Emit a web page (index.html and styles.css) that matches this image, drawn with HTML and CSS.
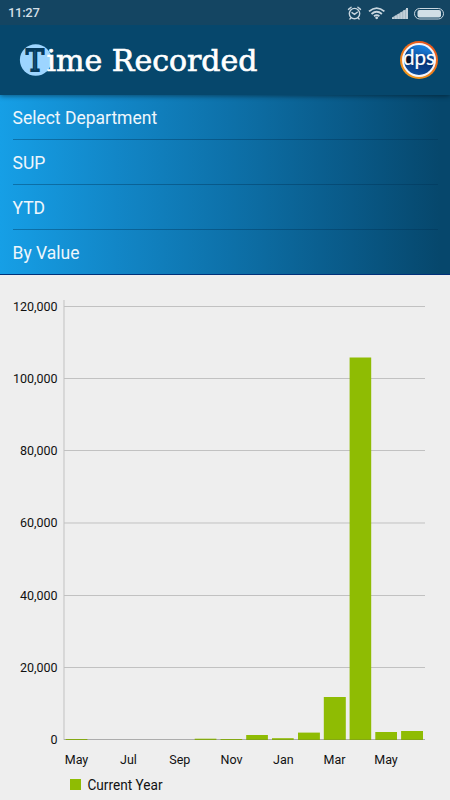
FILE: index.html
```html
<!DOCTYPE html>
<html lang="en">
<head>
  <meta charset="UTF-8">
  <title>Time Recorded</title>
  <link rel="stylesheet" href="styles.css">
</head>
<body>
  <div class="status-bar">
    <span class="clock">11:27</span>
    <svg class="status-icons" width="100" height="24" viewBox="345 0 100 24">
      <!-- alarm -->
      <g fill="none" stroke="#c9d6df" stroke-width="1.4" stroke-linecap="round">
        <circle cx="354.5" cy="12.6" r="5.2"/>
        <path d="M348.5 8.4l2.6-2.2M360.5 8.4l-2.6-2.2M350.9 17l-1 1M358.1 17l1 1M352 11.6l2.5 1.8 2.8-2.2"/>
      </g>
      <!-- wifi -->
      <g fill="none" stroke="#c9d6df" stroke-width="1.8">
        <path d="M369 10.4q7.7-6.6 15.4 0M371.5 13q5.2-4.4 10.4 0M374 15.2q2.7-2.1 5.4 0"/>
      </g>
      <circle cx="376.7" cy="16.8" r="1.4" fill="#c9d6df"/>
      <!-- signal -->
      <path fill="#9fb2bf" d="M392 18v-1.5L408 7v11z"/>
      <path fill="#c3d0d9" d="M392 16.4h2v1.6h-2zM394.8 14.7h2v3.3h-2zM397.6 13h2v5h-2zM400.4 11.3h2v6.7h-2zM403.2 9.3h2v8.7h-2zM406 7h2v11h-2z"/>
      <!-- battery -->
      <rect x="414.5" y="7.5" width="29" height="10.5" rx="5.2" fill="none" stroke="#c9d6df"/>
      <rect x="417.5" y="9" width="23.5" height="7.5" rx="2" fill="#d3dfe6"/>
    </svg>
  </div>

  <header class="app-bar">
    <svg class="title" width="246" height="40" viewBox="16 40 246 40">
      <circle cx="35.7" cy="60" r="15.8" fill="#9dd5ff"/>
      <text class="title-text initial" x="26" y="70.5" textLength="18" lengthAdjust="spacingAndGlyphs">T</text>
      <text class="title-text" x="46.5" y="70.5" textLength="211" lengthAdjust="spacingAndGlyphs">ime Recorded</text>
    </svg>
    <svg class="logo" width="40" height="40" viewBox="0 0 40 40">
      <defs>
        <linearGradient id="ring" x1="0" y1="1" x2="0.6" y2="0">
          <stop offset="0" stop-color="#f5a51c"/>
          <stop offset="1" stop-color="#e8571c"/>
        </linearGradient>
        <linearGradient id="globe" x1="0.3" y1="1" x2="0.6" y2="0">
          <stop offset="0" stop-color="#0d4f9e"/>
          <stop offset="0.55" stop-color="#053073"/>
          <stop offset="1" stop-color="#1c87e8"/>
        </linearGradient>
      </defs>
      <circle cx="20" cy="20" r="19" fill="url(#ring)"/>
      <circle cx="20" cy="20" r="17" fill="#f4f4fa"/>
      <circle cx="20" cy="20" r="15" fill="url(#globe)"/>
      <path d="M7 15A14.3 14.3 0 0 1 33 14Q21 13 16 20Q11 13 7 15z" fill="#197fdc" opacity="0.4"/>
      <circle cx="9.500" cy="20.500" r="4" fill="#04142f"/>
      <text class="logo-text" x="4" y="25.300" textLength="32" lengthAdjust="spacingAndGlyphs">dps</text>
    </svg>
  </header>

  <ul class="filters">
    <li>Select Department</li>
    <li>SUP</li>
    <li>YTD</li>
    <li>By Value</li>
  </ul>

  <main>
    <svg class="chart" width="450" height="525" viewBox="0 275 450 525">
      <path class="grid" d="M64 306.5h361M64 378.5h361M64 450.5h361M64 523h361M64 595.5h361M64 667.5h361M64 739.5h361"/>
      <path class="axis" d="M64 300v440"/>

      <g class="y-labels">
        <text x="57.5" y="311">120,000</text>
        <text x="57.5" y="383">100,000</text>
        <text x="57.5" y="455">80,000</text>
        <text x="57.5" y="527">60,000</text>
        <text x="57.5" y="599.5">40,000</text>
        <text x="57.5" y="671.5">20,000</text>
        <text x="57.5" y="744">0</text>
      </g>

      <g class="bars">
        <rect x="65.7" y="739" width="21.7" height="1"/>
        <rect x="194.7" y="738.7" width="21.7" height="1.3"/>
        <rect x="220.5" y="739" width="21.7" height="1"/>
        <rect x="246.2" y="735" width="21.7" height="5"/>
        <rect x="272" y="738.2" width="21.7" height="1.8"/>
        <rect x="298" y="732.6" width="21.9" height="7.4"/>
        <rect x="323.8" y="697" width="22" height="43"/>
        <rect x="349.6" y="357.5" width="21.6" height="382.5"/>
        <rect x="375.3" y="732" width="21.7" height="8"/>
        <rect x="401.1" y="731" width="21.9" height="9"/>
      </g>
      <path class="baseline" d="M64 739.5h361"/>

      <g class="x-labels">
        <text x="76.5" y="764">May</text>
        <text x="128.5" y="764">Jul</text>
        <text x="179.8" y="764">Sep</text>
        <text x="231.5" y="764">Nov</text>
        <text x="283.3" y="764">Jan</text>
        <text x="334.5" y="764">Mar</text>
        <text x="386" y="764">May</text>
      </g>

      <rect class="legend-key" x="70" y="779" width="11" height="11"/>
      <text class="legend-text" x="87.5" y="790" textLength="75" lengthAdjust="spacingAndGlyphs">Current Year</text>
    </svg>
  </main>
</body>
</html>
```

FILE: styles.css
```css
body {
  margin: 0;
  width: 450px;
  height: 800px;
  overflow: hidden;
  background: #eee;
  font-family: Roboto, 'Liberation Sans', sans-serif;
}
.status-bar {
  display: flex;
  align-items: center;
  justify-content: space-between;
  position: relative;
  z-index: 1;
  height: 25px;
  padding: 0 5px 0 8px;
  box-sizing: border-box;
  background: #144562;
}
.clock {
  color: #d3dfe6;
  font-size: 13px;
  font-weight: 500;
  letter-spacing: -0.3px;
}
.app-bar {
  display: flex;
  align-items: center;
  justify-content: space-between;
  position: relative;
  height: 70px;
  padding: 0 11px 0 16px;
  box-sizing: border-box;
  background: #06476c;
  box-shadow: 0 1px 5px rgba(0,0,0,0.45);
}
.title-text {
  font-family: 'DejaVu Serif', serif;
  font-size: 29px;
  fill: #fff;
  stroke: #fff;
  stroke-width: 0.65px;
}
.title-text.initial {
  fill: #1b5f8b;
  stroke: #053a5c;
  stroke-width: 1.8px;
}
.logo-text {
  font-family: Lato, sans-serif;
  font-size: 22px;
  fill: #fff;
  stroke: #fff;
  stroke-width: 0.2px;
}
.filters {
  list-style: none;
  margin: 0;
  padding: 0 12.5px;
  height: 180px;
  box-sizing: border-box;
  background: linear-gradient(90deg, #169fe6 0%, #1287c8 25%, #0d70a8 52%, #095987 78%, #06476c 98%);
  border-bottom: 1px solid #003078;
}
.filters li {
  height: 45px;
  box-sizing: border-box;
  border-bottom: 1px solid rgba(0,50,85,0.4);
  line-height: 46px;
  font-size: 17.5px;
  color: #eef6fc;
}
.filters li:last-child {
  border-bottom: none;
}
.chart {
  display: block;
}
.grid, .axis {
  fill: none;
  stroke: #c1c1c1;
  stroke-width: 1;
}
.baseline {
  stroke: rgba(90,90,90,0.2);
}
.y-labels, .x-labels {
  font-size: 12.5px;
  fill: #111;
}
.y-labels {
  text-anchor: end;
}
.x-labels {
  text-anchor: middle;
}
.bars, .legend-key {
  fill: #8fbc03;
}
.legend-text {
  font-size: 14px;
  fill: #111;
}
```
